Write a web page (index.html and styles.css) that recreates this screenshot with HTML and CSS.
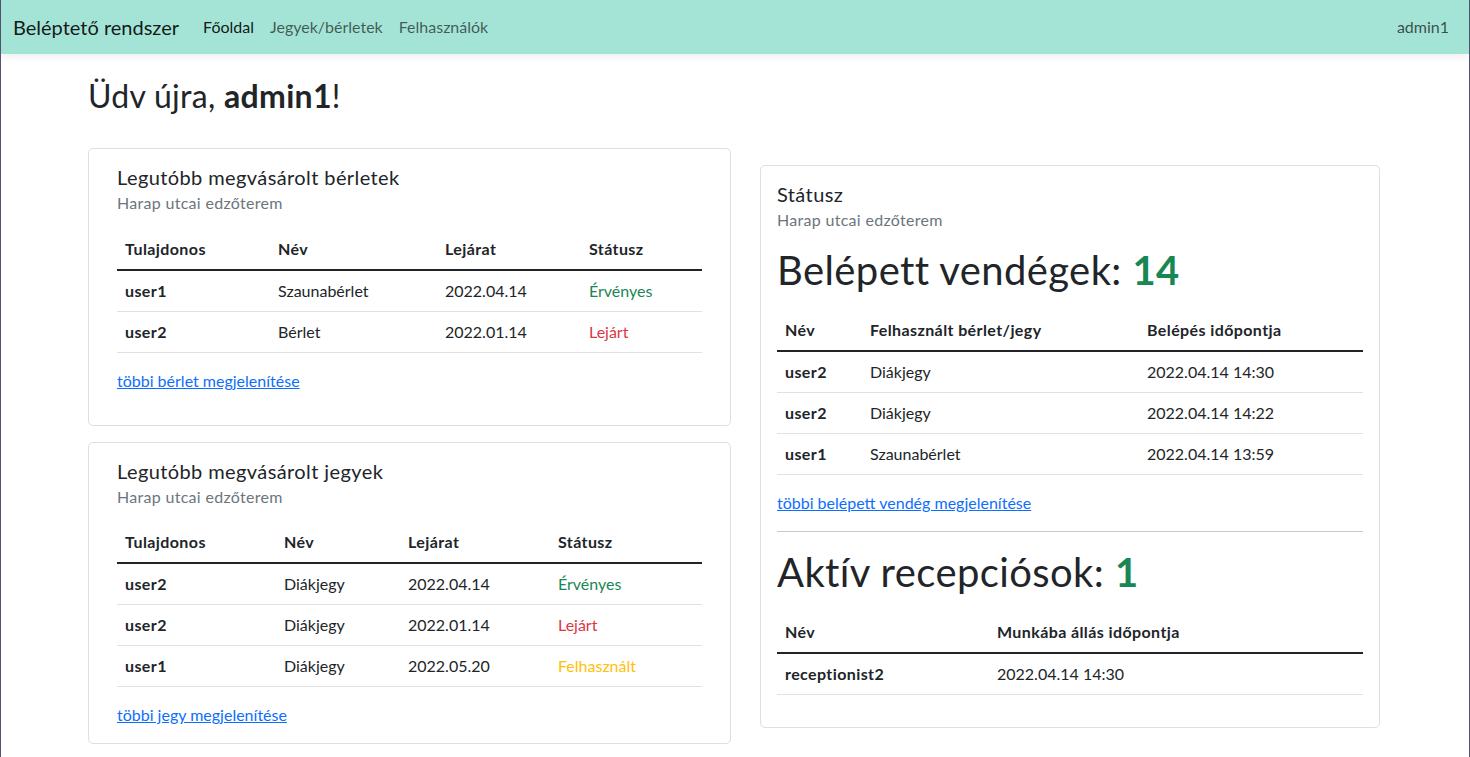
FILE: index.html
```html
<!DOCTYPE html>
<html lang="hu">
<head>
<meta charset="utf-8">
<title>Beléptető rendszer</title>
<link rel="stylesheet" href="styles.css">
</head>
<body>
<div class="frame">
  <nav class="navbar">
    <a class="brand" href="#">Beléptető rendszer</a>
    <ul class="nav">
      <li><a class="nav-link active" href="#">Főoldal</a></li>
      <li><a class="nav-link" href="#">Jegyek/bérletek</a></li>
      <li><a class="nav-link" href="#">Felhasználók</a></li>
    </ul>
    <span class="nav-user">admin1</span>
  </nav>

  <main class="container">
    <h2 class="welcome">Üdv újra, <b>admin1</b>!</h2>

    <div class="layout">
      <div class="col-left">
        <section class="card card-wide">
          <h5 class="card-title">Legutóbb megvásárolt bérletek</h5>
          <h6 class="card-subtitle">Harap utcai edzőterem</h6>
          <table class="table">
            <colgroup><col class="w153"><col class="w167"><col class="w144"><col></colgroup>
            <thead>
              <tr><th>Tulajdonos</th><th>Név</th><th>Lejárat</th><th>Státusz</th></tr>
            </thead>
            <tbody>
              <tr><th>user1</th><td>Szaunabérlet</td><td>2022.04.14</td><td class="ok">Érvényes</td></tr>
              <tr><th>user2</th><td>Bérlet</td><td>2022.01.14</td><td class="bad">Lejárt</td></tr>
            </tbody>
          </table>
          <p class="more"><a href="#">többi bérlet megjelenítése</a></p>
        </section>

        <section class="card card-wide card-next">
          <h5 class="card-title">Legutóbb megvásárolt jegyek</h5>
          <h6 class="card-subtitle">Harap utcai edzőterem</h6>
          <table class="table">
            <colgroup><col class="w159"><col class="w124"><col class="w150"><col></colgroup>
            <thead>
              <tr><th>Tulajdonos</th><th>Név</th><th>Lejárat</th><th>Státusz</th></tr>
            </thead>
            <tbody>
              <tr><th>user2</th><td>Diákjegy</td><td>2022.04.14</td><td class="ok">Érvényes</td></tr>
              <tr><th>user2</th><td>Diákjegy</td><td>2022.01.14</td><td class="bad">Lejárt</td></tr>
              <tr><th>user1</th><td>Diákjegy</td><td>2022.05.20</td><td class="used">Felhasznált</td></tr>
            </tbody>
          </table>
          <p class="more more-last"><a href="#">többi jegy megjelenítése</a></p>
        </section>
      </div>

      <div class="col-right">
        <section class="card card-status">
          <h5 class="card-title">Státusz</h5>
          <h6 class="card-subtitle">Harap utcai edzőterem</h6>
          <h1 class="big big-first">Belépett vendégek: <b class="count">14</b></h1>
          <table class="table">
            <colgroup><col class="w85"><col class="w277"><col></colgroup>
            <thead>
              <tr><th>Név</th><th>Felhasznált bérlet/jegy</th><th>Belépés időpontja</th></tr>
            </thead>
            <tbody>
              <tr><th>user2</th><td>Diákjegy</td><td>2022.04.14 14:30</td></tr>
              <tr><th>user2</th><td>Diákjegy</td><td>2022.04.14 14:22</td></tr>
              <tr><th>user1</th><td>Szaunabérlet</td><td>2022.04.14 13:59</td></tr>
            </tbody>
          </table>
          <p class="more"><a href="#">többi belépett vendég megjelenítése</a></p>
          <hr class="divider">
          <h1 class="big">Aktív recepciósok: <b class="count">1</b></h1>
          <table class="table">
            <colgroup><col class="w212"><col></colgroup>
            <thead>
              <tr><th>Név</th><th>Munkába állás időpontja</th></tr>
            </thead>
            <tbody>
              <tr><th>receptionist2</th><td>2022.04.14 14:30</td></tr>
            </tbody>
          </table>
        </section>
      </div>
    </div>
  </main>
</div>
</body>
</html>
```

FILE: styles.css
```css
* { box-sizing: border-box; }

html, body {
  margin: 0;
  padding: 0;
}

body {
  font-family: Lato, "Liberation Sans", Arial, sans-serif;
  font-size: 16px;
  line-height: 1.5;
  color: #212529;
  background: #fff;
}

.frame {
  min-height: 100vh;
  border-left: 1px solid #55556f;
  border-right: 1px solid #55556f;
}

/* ---------- navbar ---------- */
.navbar {
  display: flex;
  align-items: center;
  height: 54px;
  padding: 0 20px 0 12px;
  background: #a4e4d6;
  box-shadow: 0 3px 8px rgba(0, 0, 0, 0.07);
  position: relative;
}

.brand {
  font-size: 20px;
  line-height: 30px;
  padding: 5px 0;
  margin-right: 16px;
  color: rgba(0, 0, 0, 0.9);
  text-decoration: none;
}

.nav {
  display: flex;
  list-style: none;
  margin: 0;
  padding: 0;
}

.nav-link {
  display: block;
  padding: 8px;
  line-height: 24px;
  color: rgba(0, 0, 0, 0.62);
  text-decoration: none;
}

.nav-link.active {
  color: rgba(0, 0, 0, 0.9);
}

.nav-user {
  margin-left: auto;
  color: rgba(0, 0, 0, 0.68);
}

/* ---------- main ---------- */
.container {
  padding: 0 0 24px 87px;
}

.welcome {
  font-size: 32px;
  font-weight: 400;
  line-height: 1.2;
  margin: 23px 0 33px;
  letter-spacing: 0.3px;
}

.welcome b { font-weight: 700; }

.layout {
  display: grid;
  grid-template-columns: 643px 620px;
  column-gap: 29px;
  align-items: start;
}

.col-right { padding-top: 17px; }

.card {
  border: 1px solid #dfdfdf;
  border-radius: 5px;
  background: #fff;
}

.card-wide { padding: 16px 28px; }
.card-next { margin-top: 16px; }
.card-status { padding: 16px; }

.card-title {
  font-size: 20px;
  font-weight: 400;
  line-height: 1.2;
  margin: 0 0 8px;
  letter-spacing: 0.4px;
}

.card-subtitle {
  font-size: 16px;
  font-weight: 400;
  line-height: 1.2;
  margin: -4px 0 16px;
  color: #6c757d;
  letter-spacing: 0.3px;
}

/* ---------- tables ---------- */
.table {
  width: 100%;
  border-collapse: collapse;
  table-layout: fixed;
  margin: 16px 0 16px;
}

.table th,
.table td {
  padding: 8px;
  text-align: left;
  border-bottom: 1px solid #dee2e6;
  white-space: nowrap;
}

.table th {
  font-weight: 700;
  letter-spacing: 0.4px;
}

.table thead th {
  vertical-align: bottom;
  border-bottom: 2px solid #212529;
}

.w85 { width: 85px; }
.w124 { width: 124px; }
.w144 { width: 144px; }
.w150 { width: 150px; }
.w153 { width: 153px; }
.w159 { width: 159px; }
.w167 { width: 167px; }
.w212 { width: 212px; }
.w277 { width: 277px; }

.ok { color: #198754; }
.bad { color: #dc3545; }
.used { color: #ffc107; }

.more { margin: 0 0 16px; }
.more-last { margin-bottom: 0; }

.more a {
  color: #0d6efd;
  text-decoration: underline;
}

/* ---------- status ---------- */
.big {
  font-size: 40px;
  font-weight: 400;
  line-height: 1.2;
  margin: 0 0 16px;
  letter-spacing: 0.4px;
}

.big-first { margin-top: 16px; }

.count {
  font-weight: 700;
  color: #198754;
}

.divider {
  border: 0;
  border-top: 1px solid #212529;
  opacity: 0.25;
  margin: 0 0 16px;
}
```
